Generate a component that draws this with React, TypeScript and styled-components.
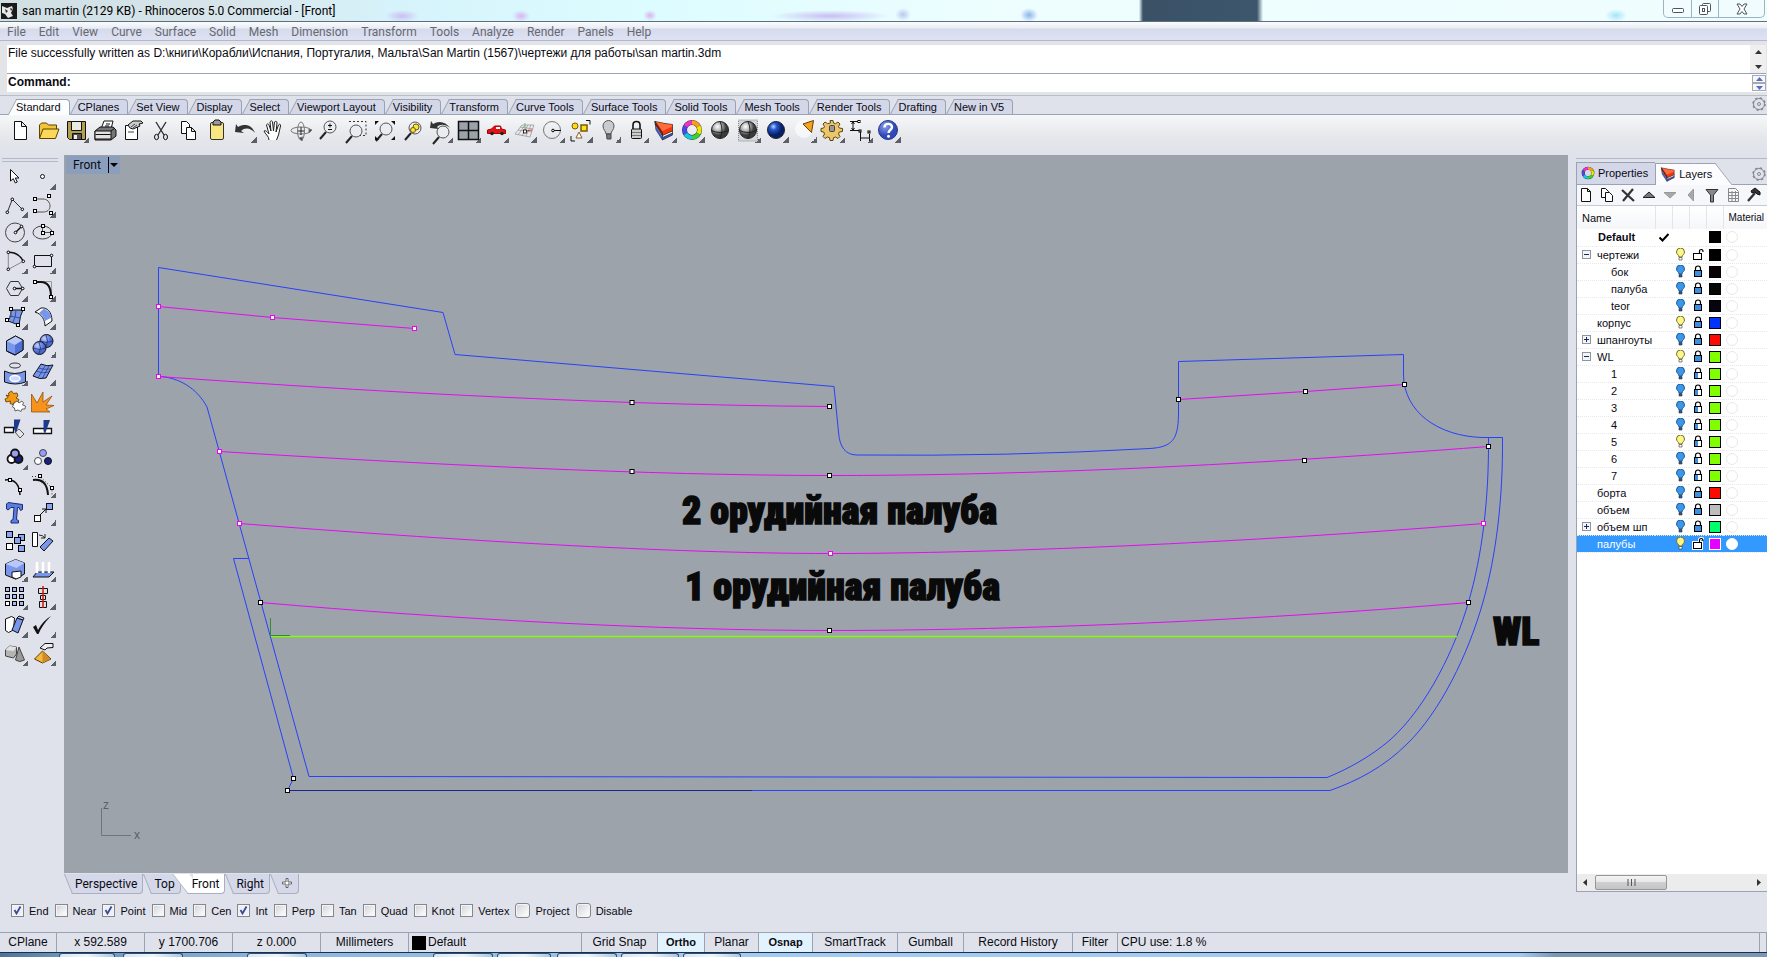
import React from "react";
import styled, { createGlobalStyle, css } from "styled-components";

const ui = `Roboto, "Open Sans", sans-serif`;
const sans = `"Liberation Sans", Arial, sans-serif`;
const chrome = "#dfe2ea";
const line = "#9aa3b3";

const Global = createGlobalStyle`
  * { box-sizing: border-box; }
  body { margin: 0; background: ${chrome}; font: 11px/14px ${sans}; color: #0a0a12; }
  button { font: inherit; color: inherit; background: none; border: 0; padding: 0; margin: 0; }
`;

const Page = styled.div`
  display: flex;
  flex-direction: column;
  min-height: 100vh;
  overflow: hidden;
`;

/* ---------- title bar ---------- */
const TitleBar = styled.header`
  display: flex;
  align-items: flex-start;
  height: 22px;
  padding: 0 2px 0 1px;
  border-bottom: 1px solid #5c6f7c;
  background:
    linear-gradient(90deg, transparent, #3a5166 4px, #3d566c 118px, transparent 124px) 1139px 0 / 124px 21px no-repeat,
    radial-gradient(ellipse, #d9b4f0, transparent 70%) 643px 10px / 14px 11px no-repeat,
    radial-gradient(ellipse, #c9bdf2, transparent 70%) 770px 10px / 120px 12px no-repeat,
    radial-gradient(ellipse, #cdbcf2, transparent 70%) 385px 10px / 34px 12px no-repeat,
    radial-gradient(ellipse, #d9b4f0, transparent 70%) 512px 10px / 18px 12px no-repeat,
    radial-gradient(ellipse, #8fb4ec, transparent 70%) 1020px 8px / 18px 14px no-repeat,
    radial-gradient(ellipse, #b9c8ee, transparent 70%) 895px 8px / 16px 13px no-repeat,
    radial-gradient(ellipse, #a5e4f8, transparent 70%) 1605px 9px / 22px 13px no-repeat,
    linear-gradient(90deg, #cfdfe2, #d8e6ec 240px, #d6f3fb 400px, #dcfcff 640px, #eefeff 1000px, #effdff);
`;
const TitleText = styled.h1`
  flex: 1;
  margin: 0 0 0 5px;
  font: 400 12px/22px ${ui};
  color: #000;
  white-space: nowrap;
`;
const WindowButtons = styled.div`
  display: flex;
  height: 18px;
  border: 1px solid #9db4bc;
  border-top: 0;
  border-radius: 0 0 5px 5px;
  background: #f1fcfe;
`;
const WindowButton = styled.button<{ $wide?: boolean }>`
  display: flex;
  align-items: center;
  justify-content: center;
  width: ${(p) => (p.$wide ? 46 : 27)}px;
  & + & { border-left: 1px solid #9db4bc; }
`;

/* ---------- menu ---------- */
const MenuBar = styled.nav`
  display: flex;
  height: 19px;
  padding-left: 1px;
  border-bottom: 1px solid #b1b8cc;
  background: linear-gradient(#fbfcfd, #e9edf4 6px, #d6dbec 7px, #dee2f4);
`;
const MenuItem = styled.button`
  padding: 0 7px 0 6px;
  font: 12px/20px ${ui};
  color: #66696f;
`;

/* ---------- command area ---------- */
const CommandArea = styled.section`
  display: flex;
  flex-direction: column;
  padding: 4px 1px 3px 7px;
  border-bottom: 1px solid #b9bfc9;
  background: #e2e4e8;
`;
const History = styled.div`
  display: flex;
  height: 29px;
  background: #fff;
  border-bottom: 1px solid ${line};
  font: 12px/16px ${sans};
`;
const HistoryText = styled.p`
  flex: 1;
  margin: 0;
  padding-left: 1px;
`;
const ScrollColumn = styled.div`
  display: flex;
  flex-direction: column;
  justify-content: space-around;
  align-items: center;
  width: 16px;
  background: #efefef;
`;
const CommandRow = styled.label`
  display: flex;
  align-items: flex-start;
  height: 18px;
  padding-left: 1px;
  background: #fff;
  font: 700 12px/16px ${sans};
`;
const CommandInput = styled.input`
  flex: 1;
  min-width: 0;
  height: 16px;
  border: 0;
  outline: 0;
  font: 12px/16px ${sans};
`;
const Spinner = styled.div`
  display: flex;
  flex-direction: column;
  width: 14px;
  padding-top: 1px;
`;
const SpinButton = styled.button`
  display: flex;
  align-items: center;
  justify-content: center;
  height: 8px;
  border: 1px solid #a4a9b4;
  background: #f6f7fb;
`;

/* ---------- toolbar tabs ---------- */
const TabRow = styled.div`
  display: flex;
  align-items: flex-end;
  height: 19px;
  padding: 0 1px 0 8px;
  border-bottom: 1px solid ${line};
`;
const TabSpacer = styled.div`
  flex: 1;
`;
const ToolbarTab = styled.button<{ $active?: boolean }>`
  position: relative;
  height: 15px;
  padding: 0 9px 0 8px;
  line-height: 16px;
  white-space: nowrap;
  z-index: 0;
  margin-bottom: ${(p) => (p.$active ? -1 : 0)}px;
  ${(p) => p.$active && css`height: 16px;`}
  &::before, &::after {
    content: "";
    position: absolute;
    z-index: -1;
    top: 0;
    bottom: 0;
    border-top: 1px solid ${line};
    background: ${(p) => (p.$active ? "#fcfdfe" : "#d3d7e8")};
  }
  &::before {
    left: 4px;
    width: 20px;
    border-left: 1px solid ${line};
    transform: skewX(-28deg);
  }
  &::after {
    left: 14px;
    right: 0;
    border-right: 1px solid ${line};
    border-radius: 0 4px 0 0;
  }
`;
const Toolbar = styled.div`
  display: flex;
  gap: 4px;
  height: 40px;
  padding: 4px 9px;
  background: linear-gradient(#f6f7f8, #e4e6eb 60%, ${chrome});
`;
const ToolButton = styled.button<{ $flyout?: boolean }>`
  width: 24px;
  height: 24px;
  flex: none;
  svg { display: block; overflow: visible; }
  ${(p) =>
    p.$flyout &&
    css`
      background: linear-gradient(135deg, transparent 50%, #5d6167 50%) right bottom / 6px 6px no-repeat;
    `}
`;

/* ---------- workspace ---------- */
const Workspace = styled.main`
  display: flex;
  flex: 1;
`;
const SideTools = styled.aside`
  width: 64px;
  flex: none;
  padding: 3px 2px 0;
`;
const Grip = styled.div`
  height: 4px;
  margin-right: 4px;
  border: solid #b3b9c4;
  border-width: 1px 0;
`;
const SideGrid = styled.div`
  display: grid;
  grid-template-columns: 24px 24px;
  gap: 4px;
  padding: 4px 2px 0;
`;
const Center = styled.div`
  display: flex;
  flex-direction: column;
  flex: 1;
  min-width: 0;
`;
const Viewport = styled.div`
  position: relative;
  display: flex;
  flex: 1;
  background: #9ca3ab;
`;
const Drawing = styled.svg`
  flex: 1;
  min-width: 0;
  width: 100%;
`;
const ViewLabel = styled.button`
  position: absolute;
  top: 1px;
  left: 2px;
  display: flex;
  align-items: center;
  height: 18px;
  padding: 0 2px 0 7px;
  gap: 7px;
  background: #8b9fbd;
  font: 12px/18px ${ui};
`;
const ViewTabs = styled.div`
  display: flex;
  height: 21px;
  padding-top: 1px;
`;
const ViewTab = styled.button<{ $active?: boolean }>`
  position: relative;
  z-index: ${(p) => (p.$active ? 1 : 0)};
  height: 20px;
  padding: 0 6px 0 11px;
  font: 12px/19px ${ui};
  isolation: isolate;
  &::before, &::after {
    content: "";
    position: absolute;
    z-index: -1;
    top: 0;
    bottom: 0;
    border-bottom: 1px solid #a9afc0;
    background: ${(p) => (p.$active ? "#fff" : "#d4d8e9")};
  }
  &::before {
    left: ${(p) => (p.$active ? -1 : 4)}px;
    width: 16px;
    border-left: 1px solid #a9afc0;
    transform: skewX(${(p) => (p.$active ? 38 : 22)}deg);
  }
  &::after {
    left: 12px;
    right: 0;
    border-right: 1px solid #a9afc0;
    border-radius: 0 0 4px 0;
  }
`;

/* ---------- layers panel ---------- */
const Panel = styled.section`
  display: flex;
  flex-direction: column;
  width: 191px;
  flex: none;
  margin: 3px 0 2px 8px;
  border-top: 1px solid #b3b9c4;
`;
const PanelTabs = styled.div`
  display: flex;
  align-items: flex-end;
  height: 26px;
  padding-right: 1px;
  border-bottom: 1px solid ${line};
`;
const PanelTab = styled.button<{ $active?: boolean }>`
  position: relative;
  z-index: 0;
  display: flex;
  align-items: center;
  gap: 3px;
  height: 22px;
  padding: 0 ${(p) => (p.$active ? 18 : 7)}px 0 4px;
  margin-bottom: ${(p) => (p.$active ? -1 : 0)}px;
  border-left: 1px solid ${line};
  font: 11px/20px ${sans};
  &::before, &::after {
    content: "";
    position: absolute;
    z-index: -1;
    top: 0;
    bottom: 0;
    border-top: 1px solid ${line};
    background: ${(p) => (p.$active ? "#fcfcfe" : "#d3d7e8")};
  }
  &::before { left: 0; right: 16px; }
  &::after {
    right: ${(p) => (p.$active ? 6 : 0)}px;
    width: 20px;
    ${(p) => p.$active && css`border-right: 1px solid ${line}; transform: skewX(38deg);`}
  }
`;
const PanelBody = styled.div`
  display: flex;
  flex-direction: column;
  flex: 1;
  border-left: 1px solid ${line};
  border-bottom: 1px solid ${line};
  background: #fff;
`;
const PanelTools = styled.div`
  display: flex;
  align-items: center;
  gap: 5px;
  height: 21px;
  padding-left: 1px;
  background: #f6f7fa;
  border-bottom: 1px solid #c5cad6;
`;
const PanelTool = styled.button`
  display: flex;
  width: 16px;
  height: 16px;
`;
const LayerTable = styled.table`
  width: 100%;
  table-layout: fixed;
  border-collapse: collapse;
  font: 11px/16px ${sans};
`;
const HeadCell = styled.th<{ $small?: boolean }>`
  height: 23px;
  padding: 0 0 0 5px;
  overflow: hidden;
  border-right: 1px solid #e2e5ea;
  background: linear-gradient(#fff, #f5f6f8);
  text-align: left;
  font-size: ${(p) => (p.$small ? 10 : 11)}px;
  font-weight: 400;
  white-space: nowrap;
  &:last-child { border-right: 0; }
`;
const LayerRow = styled.tr<{ $selected?: boolean; $bold?: boolean }>`
  height: 17px;
  border-bottom: 1px dotted #e6e8ec;
  ${(p) => p.$bold && css`font-weight: 700;`}
  ${(p) => p.$selected && css`background: #3399ff; color: #fff;`}
`;
const Cell = styled.td`
  padding: 0;
  svg { display: block; margin: 0 auto; }
`;
const NameBox = styled.div<{ $indent: number }>`
  display: flex;
  align-items: center;
  gap: 6px;
  padding-left: ${(p) => p.$indent}px;
  white-space: nowrap;
`;
const Expander = styled.button`
  width: 9px;
  height: 9px;
  border: 1px solid #8d95a3;
  background:
    linear-gradient(#1b2a55, #1b2a55) center / 5px 1px no-repeat,
    #f2f4f8;
  &[aria-expanded="false"] {
    background:
      linear-gradient(#1b2a55, #1b2a55) center / 5px 1px no-repeat,
      linear-gradient(#1b2a55, #1b2a55) center / 1px 5px no-repeat,
      #f2f4f8;
  }
`;
const Swatch = styled.span<{ $color: string; $light?: boolean }>`
  display: block;
  width: 12px;
  height: 12px;
  margin: 0 auto;
  border: 1px solid ${(p) => (p.$light ? "#fff" : "#000")};
  background: ${(p) => p.$color};
`;
const MaterialDot = styled.span<{ $on?: boolean }>`
  display: block;
  width: 12px;
  height: 12px;
  margin-left: 3px;
  border: 1px solid ${(p) => (p.$on ? "#fff" : "#e9e9e9")};
  border-radius: 50%;
  background: #fff;
`;
const HScroll = styled.div`
  display: flex;
  align-items: center;
  height: 17px;
  margin-top: auto;
  padding: 0 5px;
  background: #ececec;
`;
const ScrollThumb = styled.button`
  display: flex;
  align-items: center;
  justify-content: center;
  width: 72px;
  height: 15px;
  margin: 0 auto 0 6px;
  border: 1px solid #979797;
  border-radius: 2px;
  background: linear-gradient(#f4f4f4, #e6e6e6 50%, #cfcfd1 50%, #c4c4c6);
`;

/* ---------- osnap + status ---------- */
const OsnapBar = styled.div`
  display: flex;
  align-items: center;
  gap: 6px;
  height: 38px;
  padding: 0 0 5px 11px;
`;
const SnapLabel = styled.label`
  display: flex;
  align-items: center;
  gap: 5px;
`;
const SnapBox = styled.input<{ $button?: boolean }>`
  appearance: none;
  width: ${(p) => (p.$button ? 15 : 13)}px;
  height: ${(p) => (p.$button ? 15 : 13)}px;
  margin: 0;
  border: 1px solid #83888f;
  border-radius: ${(p) => (p.$button ? 3 : 0)}px;
  background: linear-gradient(135deg, #cfd2d8, #f8f8f8 80%);
  box-shadow: inset 0 0 0 1px #f4f4f4;
  &:checked {
    background:
      url("data:image/svg+xml,%3Csvg xmlns='http://www.w3.org/2000/svg' viewBox='0 0 11 11'%3E%3Cpath d='M2.5 5l2 3.5L8.500 1.500' fill='none' stroke='%233a4a94' stroke-width='1.800'/%3E%3C/svg%3E") center / 11px 11px no-repeat,
      #eef0f5;
  }
`;
const StatusBar = styled.footer`
  display: flex;
  height: 20px;
  border-top: 1px solid ${line};
  font: 12px/19px ${sans};
`;
const StatusCell = styled.button<{ $w?: number; $on?: boolean; $left?: boolean }>`
  display: flex;
  align-items: center;
  justify-content: ${(p) => (p.$left ? "flex-start" : "center")};
  gap: 2px;
  ${(p) => (p.$w ? css`width: ${p.$w}px; flex: none;` : css`flex: 1;`)}
  padding: 0 3px;
  border-right: 1px solid ${line};
  white-space: nowrap;
  ${(p) => p.$on && css`background: #e3f3fd; font-weight: 700; font-size: 11px;`}
`;
const LayerChip = styled.span`
  width: 14px;
  height: 14px;
  background: #000;
`;
const Taskbar = styled.div`
  display: flex;
  gap: 4px;
  height: 5px;
  padding-left: 59px;
  border-top: 1px solid #16304f;
  background: linear-gradient(90deg, #4f7396, #6d93b8 60px, #8ab4dc 260px, #a3caf0 700px, #a3caf0 86%, #7c96b4 88%);
`;
const TaskItem = styled.span<{ $w: number; $space?: number }>`
  width: ${(p) => p.$w}px;
  margin-left: ${(p) => p.$space || 0}px;
  border: 1px solid #31506f;
  border-bottom: 0;
  border-radius: 3px 3px 0 0;
  background: linear-gradient(90deg, #d5e6f5, #f0f6fb, #a9c8e6);
`;

/* ---------- icons ---------- */
const Svg = ({ children, size = 24, box = 24 }: { children: React.ReactNode; size?: number; box?: number }) => (
  <svg width={size} height={size} viewBox={`0 0 ${box} ${box}`} fill="none" stroke="#111" aria-hidden="true">
    {children}
  </svg>
);
const Sq = ({ x, y, f = "#fff", s = 3 }: { x: number; y: number; f?: string; s?: number }) => (
  <rect x={x - s / 2} y={y - s / 2} width={s} height={s} fill={f} stroke="#000" />
);
const Dot = ({ x, y }: { x: number; y: number }) => <circle cx={x} cy={y} r="1.300" fill="#fff" stroke="#000" />;

const Ball = ({ fill, grid }: { fill: string; grid?: boolean }) => (
  <g>
    <circle cx="11" cy="11" r="8.500" fill={`url(#${fill})`} stroke="#222" />
    {grid && <path d="M2.500 11.500q8.500 4 17 0M11 2.500q4 8.500 0 17" stroke="#222" />}
  </g>
);
const Layers = () => (
  <g stroke="#222" strokeWidth=".7" strokeLinejoin="round">
    <path d="M2 2.500L9.500 14v7L3 11z" fill="#dfe3ee" />
    <path d="M9.500 18l10-4.500V16l-10 5z" fill="#3558c8" />
    <path d="M9.500 15.500l10-4v2.500l-10 4.500z" fill="#fff" />
    <path d="M2.500 7l7 11v3L3 11z" fill="#3558c8" stroke="none" />
    <path d="M2 2.500L9.500 14v3L2.500 6z" fill="#a81505" />
    <path d="M2 2.500L12 4.500l7.500 1V12l-10 4.500V14z" fill="#f5360c" />
    <path d="M3 3l9 2 7 .8v2L9.500 12z" fill="#ff6b3a" stroke="none" />
  </g>
);
const Wheel = () => (
  <g fill="none" strokeWidth="4">
    <circle cx="11" cy="11" r="7.500" stroke="#333" strokeWidth="5" />
    <path d="M11 3.500A7.500 7.500 0 0 1 17.500 7.300" stroke="#ff9b1a" />
    <path d="M17.500 7.300A7.500 7.500 0 0 1 17.500 14.800" stroke="#e8e800" />
    <path d="M17.500 14.800A7.500 7.500 0 0 1 11 18.500" stroke="#35d335" />
    <path d="M11 18.500A7.500 7.500 0 0 1 4.500 14.800" stroke="#12c8e0" />
    <path d="M4.500 14.800A7.500 7.500 0 0 1 4.500 7.300" stroke="#4848f0" />
    <path d="M4.500 7.300A7.500 7.500 0 0 1 11 3.500" stroke="#f032c8" />
  </g>
);
const Lens = ({ x = 13, y = 8 }: { x?: number; y?: number }) => (
  <g>
    <path d={`M${x - 4} ${y + 5}L${x - 10} ${y + 12}`} stroke="#222" strokeWidth="2" />
    <circle cx={x} cy={y} r="6" fill="#e9edf2" fillOpacity=".8" stroke="#555" />
  </g>
);

const topIcons: { name: string; fly?: boolean; art: React.ReactNode }[] = [
  { name: "New", art: <path d="M5.500 2.500h7l5 5v13h-12zM12.500 2.500v5h5" fill="#fff" /> },
  {
    name: "Open",
    art: (
      <>
        <path d="M2.500 19V6l2-2h5l2 2h8v4" fill="#f2c33b" stroke="#5b4300" />
        <path d="M2.500 19.500L6 10h16l-3.500 9.500z" fill="#fbd85a" stroke="#5b4300" />
      </>
    ),
  },
  {
    name: "Save",
    fly: true,
    art: (
      <>
        <path d="M2.500 2.500h18v18h-16l-2-2z" fill="#b2a04c" />
        <path d="M6.500 2.500h10v9h-10z" fill="#e8ebe0" />
        <path d="M7.500 14.500h9v6h-9z" fill="#555" />
        <path d="M9 16h3v4H9z" fill="#eee" stroke="none" />
      </>
    ),
  },
  {
    name: "Print",
    art: (
      <>
        <path d="M8 10l3-8h9l-2 8z" fill="#fff" />
        <path d="M2 12l5-4h13l3 3v6l-5 4H2z" fill="#777" />
        <path d="M2 12h16v8H2z" fill="#e2e2e2" />
        <path d="M2.500 15.500h15M18 12l4-3M13 5h4M12 7h4" />
      </>
    ),
  },
  {
    name: "Document properties",
    art: (
      <>
        <path d="M4.500 6.500h12v14h-12z" fill="#fff" />
        <path d="M7 6l5-4h8l2 2-4 1 1 2-7 3-3-1z" fill="#ccc" />
        <path d="M10 8l4-3M12 9l4-3M7 13h6" stroke="#444" />
      </>
    ),
  },
  {
    name: "Cut",
    art: (
      <>
        <path d="M7 3l8 13M17 3L9 16" stroke="#333" strokeWidth="1.400" />
        <ellipse cx="7.500" cy="18" rx="2" ry="2.700" />
        <ellipse cx="16.500" cy="18" rx="2" ry="2.700" />
      </>
    ),
  },
  {
    name: "Copy",
    art: (
      <>
        <path d="M4.500 2.500h5l3 3v9h-8z" fill="#fff" />
        <path d="M9.500 8.500h5l4 4v8h-9zM14.500 8.500v4h4" fill="#fff" />
      </>
    ),
  },
  {
    name: "Paste",
    art: (
      <>
        <rect x="5.500" y="3.500" width="13" height="17" rx="1.500" fill="#f7e682" stroke="#333" />
        <path d="M8 6V3l2-2h4l2 2v3z" fill="#999" />
      </>
    ),
  },
  {
    name: "Undo",
    fly: true,
    art: <path d="M2 13l1-8 2 3c7-4 14-2 17 6-4-5-10-6-14-2l3 2z" fill="#333" stroke="none" />,
  },
  {
    name: "Pan",
    art: (
      <path
        d="M8 21c0-4-4-6-5-9 2-1 3 1 5 3L5.500 6c1-2 2-1 2.500 0l2 6-1-9c1-2 2.500-1 2.500 0l1 9 1-9c1-1 2.500-1 2.500 1l-1 9 2.500-7c1-1.500 2.500-.5 2 1l-2 9-2 5"
        fill="#fff"
        stroke="#222"
      />
    ),
  },
  {
    name: "Rotate view",
    fly: false,
    art: (
      <g stroke="#777">
        <ellipse cx="12" cy="11.500" rx="10" ry="3.500" />
        <ellipse cx="12" cy="12" rx="3.500" ry="9" />
        <path d="M12 8v8M9 12h6" stroke="#222" />
        <path d="M20 10l3 1-3 3zM10 19l3 3 1-4z" fill="#444" />
      </g>
    ),
  },
  { name: "Zoom dynamic", art: (<><Lens /><path d="M11 6.500h4M13 4.500v4M11 10.500h4" /></>) },
  { name: "Zoom window", art: (<><path d="M4 2.500h17v14h-6" stroke="#333" strokeDasharray="2 2" /><Lens x={11} y={12} /></>) },
  {
    name: "Zoom extents",
    art: (
      <>
        <Lens x={13} y={10} />
        <path d="M2 2h4L2 6zM22 2h-4l4 4zM2 21h4l-4-4zM22 21v-4l-4 4z" fill="#111" stroke="none" />
      </>
    ),
  },
  {
    name: "Zoom selected",
    art: (
      <>
        <Lens x={14} y={9} />
        <circle cx="15" cy="8" r="3" fill="#ffe53b" stroke="#6b5a00" />
        <circle cx="12" cy="11" r="2.500" fill="#ffe53b" stroke="#6b5a00" />
      </>
    ),
  },
  {
    name: "Undo view",
    fly: true,
    art: (
      <>
        <Lens x={14} y={13} />
        <path d="M1 9l1-7 2 3c6-4 13-2 17 4-5-4-10-4-13-1l2 2z" fill="#333" stroke="none" />
      </>
    ),
  },
  {
    name: "Viewports",
    fly: true,
    art: (
      <>
        <path d="M1.500 2.500h20v18h-20z" fill="#9ba2aa" strokeWidth="1.500" />
        <path d="M11.500 2v18M2 11.500h19" strokeWidth="1.500" />
      </>
    ),
  },
  {
    name: "Right view",
    fly: true,
    art: (
      <>
        <path d="M2.500 11l4-1 3-3h6l1 3 4 1v3.500h-18z" fill="#e01414" stroke="#a00" />
        <path d="M11 8h4v2h-4z" fill="#fff" stroke="none" />
        <circle cx="7" cy="14.500" r="1.800" fill="#222" stroke="none" />
        <circle cx="17" cy="14.500" r="1.800" fill="#222" stroke="none" />
      </>
    ),
  },
  {
    name: "Set CPlane",
    fly: true,
    art: (
      <g stroke="#999" strokeWidth=".8">
        <path d="M2 15l7-9h12l-4 12zM5 16l7-10M9 17l6-11M13 17l5-11M5 11l14 2M7 8l13 2" />
        <path d="M13 12l6-1" stroke="#d00" />
        <path d="M12 12V4" stroke="#6a6" />
        <Sq x={12} y={12.5} />
      </g>
    ),
  },
  {
    name: "Circle",
    fly: true,
    art: (
      <>
        <circle cx="11" cy="11" r="8.500" stroke="#777" />
        <path d="M11 11.500h9" />
        <Dot x={12} y={11.5} />
      </>
    ),
  },
  {
    name: "Select",
    fly: true,
    art: (
      <>
        <path d="M17 1.500h4v4M2 17v5h4" />
        <circle cx="6" cy="7" r="3" fill="#ffd91a" stroke="#7a5a00" />
        <rect x="12" y="6" width="6" height="6" fill="#ffe11a" stroke="#7a5a00" strokeWidth="1.500" />
        <path d="M10 13l3 6H7z" fill="#fff" stroke="#8a5a20" />
      </>
    ),
  },
  {
    name: "Hide",
    fly: true,
    art: (
      <>
        <path d="M9 15c0-3-3-4-3-8a5.500 5.500 0 0 1 11 0c0 4-3 5-3 8z" fill="#c9cbce" stroke="#555" />
        <path d="M9.500 15h4.500v5H10z" fill="#777" stroke="#444" />
      </>
    ),
  },
  {
    name: "Lock",
    fly: true,
    art: (
      <>
        <path d="M8 10V6q0-3.500 3.500-3.500T15 6v4" strokeWidth="1.600" />
        <rect x="6.500" y="10" width="10" height="9.500" rx="1" fill="#ccc" />
        <path d="M7 13.500h9M7 16.500h9" stroke="#777" />
      </>
    ),
  },
  { name: "Layers", fly: true, art: <Layers /> },
  { name: "Object properties", fly: true, art: <Wheel /> },
  { name: "Shade", art: <Ball fill="grey" grid /> },
  {
    name: "Shade viewport",
    fly: true,
    art: (
      <>
        <rect x="1.500" y="1" width="19" height="21" stroke="#888" strokeDasharray="1 1" fill="#d4d6da" />
        <Ball fill="grey" grid />
      </>
    ),
  },
  { name: "Render", fly: true, art: <Ball fill="blue" /> },
  {
    name: "Spotlight",
    fly: true,
    art: (
      <>
        <circle cx="11" cy="10" r="9" fill="#fff" fillOpacity=".6" stroke="none" />
        <path d="M10 5l10.500-3.500-2 12z" fill="#f5a21c" stroke="#6b3e00" />
      </>
    ),
  },
  {
    name: "Options",
    fly: true,
    art: (
      <>
        <path
          d="M9.500 4L9 1.500h3L12.500 4l2 .7L17 3l2 2-1.500 2.500.8 1.500 3.200.5v3l-3.200.5-.8 2L19 17.500l-2 2-2.500-1.500-2 .7-.5 2.800H9l-.5-2.800-2-.7L4 19.500l-2-2L3.500 15l-.8-2-2.700-.5v-3L2.700 9l.8-1.500L2 5l2-2 2.500 1.700z"
          fill="#edc667"
          stroke="#5d4410"
        />
        <rect x="8.500" y="6.500" width="5" height="6" rx="1" fill="#999" stroke="#444" />
      </>
    ),
  },
  {
    name: "Dimension",
    fly: true,
    art: (
      <>
        <path d="M1 2.500h8M1 11.500h8M4 3v8M2.500 5L4 3l1.500 2M2.500 9L4 11l1.500-2M11.500 12v10M20.500 15v7M12 19h8M9 11.500h3" />
        <Sq x={10} y={2.5} s={2} />
        <Sq x={11} y={12} s={2} />
        <Sq x={20} y={13} s={2} />
      </>
    ),
  },
  {
    name: "Help",
    fly: true,
    art: (
      <>
        <circle cx="11" cy="11" r="9.500" fill="url(#help)" stroke="#27368a" />
        <path d="M7.500 8.500c0-5 7.500-4.500 7.500-.5 0 3-3.500 3-3.500 6" stroke="#fff" strokeWidth="2.400" />
        <circle cx="11.500" cy="17.300" r="1.500" fill="#fff" stroke="none" />
      </>
    ),
  },
];

const B = "#7896ec";
const L = "#b9c8f8";
const sideIcons: { name: string; fly?: boolean; art: React.ReactNode }[] = [
  { name: "Pointer", art: <path d="M6.500 3.500V15l2.800-2.300 2 4.300 2-1-2-4h3.700z" fill="#fff" /> },
  { name: "Point", fly: true, art: <circle cx="10.500" cy="10.500" r="2" fill="#fff" /> },
  { name: "Polyline", fly: true, art: (<><path d="M3.300 18.300l5-13 10 10" stroke="#333" /><Dot x={3.3} y={18.3} /><Dot x={8.3} y={5.3} /><Dot x={18.3} y={15.3} /></>) },
  { name: "Curve", fly: true, art: (<><path d="M3 5h8c4 0 7 3 7 7s-3 6-7 6H3" stroke="#555" /><Sq x={3} y={5} /><Sq x={17} y={2} /><Sq x={3} y={17} /><Sq x={19} y={19} /></>) },
  { name: "Circle center", fly: true, art: (<><circle cx="11" cy="10.500" r="9.500" stroke="#444" /><path d="M11.500 10.500l6-6" strokeWidth="1.500" /><Dot x={11.5} y={10.5} /><Dot x={17.5} y={4.5} /></>) },
  { name: "Ellipse", fly: true, art: (<><ellipse cx="10.500" cy="10.500" rx="9.500" ry="6.500" stroke="#444" /><path d="M10.500 4v6.500H20" stroke="#555" /><Sq x={11} y={4} /><Sq x={11} y={11} /><Sq x={20} y={11} /></>) },
  { name: "Arc", fly: true, art: (<><path d="M4.300 2.300v17l15-8" stroke="#888" /><path d="M4.300 2.300c7 0 12 3 15 9" strokeWidth="1.500" /><Dot x={4.3} y={2.3} /><Dot x={19.3} y={11.3} /><Dot x={4.3} y={19.3} /></>) },
  { name: "Rectangle", fly: true, art: (<><path d="M2.500 5.500h17v11h-17z" /><Dot x={19.5} y={5.5} /><Dot x={2.5} y={16.5} /></>) },
  { name: "Polygon", fly: true, art: (<><path d="M2.500 10.500l4-7h8l4 7-4 7h-8z" stroke="#333" /><path d="M10.500 10.500h8" strokeWidth="1.500" /><Dot x={10.5} y={10.5} /><Dot x={18.7} y={10.5} /></>) },
  { name: "Fillet curves", fly: true, art: (<><path d="M9 3.500h10.500V19" stroke="#999" /><path d="M3 4h6q10 0 10 15" strokeWidth="2" /><Sq x={3} y={4} /><Sq x={19} y={19} /></>) },
  { name: "Surface from points", fly: true, art: (<><path d="M7 4h12q-3 5-4 15L4 15q4-5 3-11z" fill={B} /><path d="M5 10l12 2M12 4q0 7-3 12" stroke="#3c4f94" /><Sq x={7} y={3} /><Sq x={19} y={3} /><Sq x={3} y={14} /><Sq x={14} y={19} /></>) },
  { name: "Sweep surface", fly: true, art: (<><path d="M3 6l6-4c6-1 11 4 11 13l-7 5c0-6-3-12-10-14z" fill="#fff" /><path d="M7 7l5-4.500q7 4 7.500 9L13 15q-2-6-6-8z" fill={B} stroke="none" /></>) },
  { name: "Box", fly: true, art: (<><path d="M2.500 7l9-5 7.500 4v10l-8 5-8.500-4z" fill={B} /><path d="M2.500 7l9-5 7.500 4-8 5z" fill={L} stroke="none" /><path d="M11 11v10l8-5V6z" fill="#4f70d6" stroke="none" /><path d="M2.500 7l9-5 7.500 4v10l-8 5-8.500-4z" /></>) },
  { name: "Boolean union", fly: true, art: (<><circle cx="14.500" cy="7" r="6.500" fill="url(#blue2)" /><circle cx="7.500" cy="14" r="6.500" fill="url(#blue2)" /><path d="M8 7q6 3 13 0M14 1q3 6 0 12M1 14q6 3 13 0M7 8q3 6 0 12" stroke="#20306e" strokeWidth=".8" /></>) },
  { name: "Project", fly: true, art: (<><ellipse cx="11" cy="3.500" rx="5.500" ry="2.500" stroke="#333" /><path d="M.5 9q10 5 21 0v11q-10 4-21 0z" fill={B} /><ellipse cx="11" cy="16.500" rx="5" ry="3" fill="#cfd9ff" stroke="#fff" strokeWidth="1.500" /></>) },
  { name: "Mesh", fly: true, art: (<><path d="M1 14L9 2q6 3 12 1l-7 13q-6 2-13-2z" fill={B} /><path d="M4 9q6 3 13 1M6 6q6 2 13 1M13 4L6 16M17 4l-7 13" stroke="#25357e" strokeWidth=".7" /></>) },
  {
    name: "Join",
    art: (
      <>
        <path d="M2 5l3 1-.5-3 3-2 2 2.500L13 3l1 3-2 2 3 1.500L13.500 13l-3-1L9 14.500 6 13.500 6.500 11 2 12 1 9l3-1.500z" fill="#f39a13" stroke="#5a3500" strokeWidth=".8" />
        <path d="M10 13l3-2 2 2 3-2 1.500 2-1 2 3 1-.5 3-3 0-1 2.500-3-1.500-3 1-.5-3-2-1z" fill="#fff" stroke="#444" strokeWidth=".8" />
      </>
    ),
  },
  { name: "Explode", art: <path d="M-.5 22V4l5.500 9 6-11v10l9-6-6 9 8 .5-8 3.500 4 3z" fill="#f6921e" stroke="#8a4400" strokeWidth=".7" /> },
  { name: "Trim", art: (<><path d="M.5 9.500h9v5h-9z" fill="#fff" strokeWidth="1.300" /><path d="M11 14l4-3 5 5-4 4z" fill="#e4e6ea" stroke="#555" /><path d="M10 1.500h6.500L12 15l-2-4z" fill="#1f3a8c" stroke="none" /></>) },
  { name: "Split", art: (<><path d="M1.500 10.500h18v5h-18z" fill="#fff" strokeWidth="1.300" /><path d="M11.500 2h6.500l-5 14-1.500-3z" fill="#1f3a8c" stroke="none" /></>) },
  { name: "Group", fly: true, art: (<g strokeWidth="1.800"><circle cx="7.500" cy="13" r="4" fill="#fff" /><circle cx="14.500" cy="13" r="4" fill="#1c2080" /><circle cx="11" cy="7.500" r="4" fill="#9a9cf0" /></g>) },
  { name: "Ungroup", art: (<><circle cx="11" cy="7" r="3.500" fill="#9a9cf0" stroke="#445" /><circle cx="6" cy="15" r="3.500" fill="#fff" stroke="#445" /><circle cx="16" cy="15" r="3.500" fill="#1c2080" /></>) },
  { name: "Edit points", art: (<><path d="M1 6q14-2 15 15" strokeWidth="1.500" /><Sq x={6} y={6} /><Sq x={16} y={16} /></>) },
  { name: "Control points", fly: true, art: (<><path d="M1 6q14-2 15 15" strokeWidth="2" /><path d="M0 2.500h8l12 11.500v8" stroke="#333" strokeDasharray="1 2" /><Sq x={8} y={2} /><Sq x={20} y={14} /></>) },
  { name: "Text", art: <path d="M2.500 2l1.500-1.500 14.500 2v5l-2 1-1.500-3h-1.500l-1 12 2 1v2.500H7v-2.500l2-1 1-12H7L4 8 2.500 7z" fill="#5c7de0" stroke="#1a2c70" /> },
  { name: "Move", fly: true, art: (<><path d="M8 13l6-6M10 7h4v4" /><rect x="2.500" y="13.500" width="6" height="6" fill="#fff" /><rect x="14.500" y="1.500" width="6" height="6" fill="#8aa4f0" /></>) },
  { name: "Copy objects", art: (<><Sq x={5.5} y={4.5} s={6} f="#8aa4f0" /><Sq x={5.5} y={16.5} s={6} /><Sq x={17.5} y={7.5} s={6} f="#8aa4f0" /><Sq x={13.5} y={10.5} s={6} f="#8aa4f0" /><Sq x={17.5} y={18.5} s={6} f="#8aa4f0" /></>) },
  { name: "Rotate", art: (<><path d="M.5 2.500h5v14h-5z" fill="#fff" /><path d="M8 17l9-9 4 3-9 10z" fill={B} /><path d="M7 5q4 0 6 3M13 4v4H9" strokeWidth=".9" /></>) },
  { name: "Solid tools", fly: true, art: (<><path d="M1.500 6l10-4.500L20.500 5v11l-9 5-10-4z" fill={B} /><path d="M1.500 6l10-4.500L20.500 5l-8 5z" fill={L} stroke="none" /><path d="M8 14l9-1v6l-5 2-4-2z" fill="#fff" /></>) },
  { name: "Project curve", fly: true, art: (<><path d="M1 19l4-5h17l-5 5z" fill={B} /><path d="M5 4v11M11 4v11M17 4v11" stroke="#fff" strokeWidth="2.500" /></>) },
  {
    name: "Array",
    fly: true,
    art: (
      <>
        {[3, 10, 17].map((x) => [3, 10, 17].map((y) => <Sq key={`${x}-${y}`} x={x + 0.5} y={y + 0.5} s={4} f={x === 3 && y === 17 ? "#fff" : "#a9b9f3"} />))}
      </>
    ),
  },
  { name: "Align", fly: true, art: (<><path d="M6.500 2.500h9v5h-9zM8.500 9.500h5v4h-5zM7.500 15.500h7v6h-7z" fill="#e9dede" /><path d="M11 0v22" stroke="#c81818" strokeWidth="1.500" /></>) },
  { name: "Offset", fly: true, art: (<><path d="M1.500 5l6-2.500 3 1.500-1 12-5 2.500-3-2z" fill="#fff" /><path d="M13 4l6 2-5 13-6-3z" fill={B} /><path d="M13 4l2-2 5 2-1 2z" fill={L} /></>) },
  { name: "Check", fly: true, art: <path d="M1 13l3-2 2 5C10 9 14 5 19 2 13 8 9 14 6.500 20H5z" fill="#111" stroke="none" /> },
  { name: "Solids", fly: true, art: (<><path d="M15 5l5.500 13q-5 3-9 0z" fill="#999" stroke="#444" /><path d="M1.500 8l4-4 7 1v7l-3 4-8-2z" fill="#b4b4b4" stroke="#444" /><path d="M1.500 8l4-4 7 1-3 4z" fill="#e2e2e2" stroke="none" /></>) },
  { name: "Pyramid", fly: true, art: (<><path d="M2.500 17l8-8 8.500 8-8.500 4z" fill="#f5b73e" stroke="#5a3c00" /><path d="M10.500 9v12l8-4z" fill="#cf8c26" stroke="none" /><path d="M8 6l5-4.500h8v4l-6 .5-2 2z" fill="#eee" /></>) },
];

const Bulb = ({ on }: { on?: boolean }) => (
  <svg width="9" height="13" viewBox="0 0 9 13" aria-hidden="true">
    <path d="M3 9c0-2-2.500-2.500-2.500-5a4 4 0 0 1 8 0c0 2.500-2.500 3-2.500 5z" fill={on ? "#fbf78c" : "#3d97e8"} stroke={on ? "#77701c" : "#1d5c9c"} />
    <path d="M3 9.500h3v2.500H3z" fill={on ? "#fff" : "#1d5c9c"} stroke="#333" strokeWidth=".6" />
  </svg>
);
const LockIcon = ({ kind, light }: { kind: "open" | "full" | "half"; light?: boolean }) => (
  <svg width="12" height="13" viewBox="0 0 12 13" fill="none" stroke="#000" aria-hidden="true">
    {light && <path d="M1.500 5.500h8v7h-8zM7.500 5V3q0-1.500 2-1.500t2 2" stroke="#fff" strokeWidth="3" />}
    <path d={kind === "open" ? "M7.500 6V3q0-1.500 1.800-1.500T11 4" : "M3.500 6V3.500q0-2.500 2.500-2.500t2.500 2.500V6"} strokeWidth="1.200" />
    <rect x={kind === "open" ? 1.5 : 2.5} y="5.500" width={kind === "open" ? 8 : 7} height="6" fill="#fff" />
    {kind !== "open" && <rect x="3" y="6" width={kind === "full" ? 6 : 3} height="5" fill="#3d8fe0" stroke="none" />}
  </svg>
);
const Gear = () => (
  <svg width="14" height="14" viewBox="0 0 14 14" fill="none" stroke="#85888e" aria-hidden="true">
    <circle cx="7" cy="7" r="5.500" strokeWidth="1" />
    <circle cx="7" cy="7" r="6" strokeWidth="1.600" strokeDasharray="2.360 2.360" />
    <circle cx="7" cy="7" r="1.500" />
  </svg>
);
const Arrow = ({ d, color = "#333" }: { d: "up" | "down" | "left" | "right"; color?: string }) => {
  const paths = { up: "M0 5l3.500-4L7 5z", down: "M0 2l3.500 4L7 2z", left: "M5 0L1 3.500 5 7z", right: "M2 0l4 3.500L2 7z" };
  return (
    <svg width="7" height="7" viewBox="0 0 7 7" aria-hidden="true">
      <path d={paths[d]} fill={color} />
    </svg>
  );
};

const panelIcons: { name: string; art: React.ReactNode }[] = [
  { name: "New layer", art: <path d="M3.500 1.500h6l3 3v10h-9zM9.500 1.500v3h3" fill="#fff" /> },
  { name: "New sublayer", art: (<><path d="M2.500 1.500h4l3 3v6h-7z" fill="#fff" /><path d="M6.500 5.500h4l3 3v6h-7z" fill="#fff" /></>) },
  { name: "Delete", art: <path d="M2 3l12 11M13 2L3 14" strokeWidth="2.200" stroke="#333" /> },
  { name: "Move up", art: <path d="M2 10.500L8 5l6 5.500z" fill="#777" stroke="#222" /> },
  { name: "Move down", art: <path d="M2 5.500L8 11l6-5.500z" fill="#a8a8a8" stroke="#999" /> },
  { name: "Move out", art: <path d="M10.500 2L5 8l5.500 6z" fill="#a8a8a8" stroke="#999" /> },
  { name: "Filter", art: (<path d="M2 2.500h12L9.500 8v7h-3V8z" fill="#888" stroke="#333" />) },
  { name: "Columns", art: (<path d="M3.500 1.500h7l3 3v10h-10zM3.500 5.500h10M3.500 8.500h10M3.500 11.500h10M7 4v10M10.500 4v10" stroke="#888" />) },
  { name: "Tools", art: (<><path d="M2 14L9 6" stroke="#333" strokeWidth="2.400" /><path d="M5 4l4-3 5 4v3l-3-1-2-2-3 1z" fill="#333" /></>) },
];

/* ---------- data ---------- */
const menus = ["File", "Edit", "View", "Curve", "Surface", "Solid", "Mesh", "Dimension", "Transform", "Tools", "Analyze", "Render", "Panels", "Help"];
const tabs = ["Standard", "CPlanes", "Set View", "Display", "Select", "Viewport Layout", "Visibility", "Transform", "Curve Tools", "Surface Tools", "Solid Tools", "Mesh Tools", "Render Tools", "Drafting", "New in V5"];

type Layer = {
  name: string;
  indent: number;
  color: string;
  bulb?: boolean;
  lock?: "open" | "full" | "half";
  expanded?: boolean;
  current?: boolean;
  selected?: boolean;
};
const green = "#80ff00";
const layers: Layer[] = [
  { name: "Default", indent: 21, color: "#000", current: true },
  { name: "чертежи", indent: 5, color: "#000", bulb: true, lock: "open", expanded: true },
  { name: "бок", indent: 34, color: "#0a0303", bulb: false, lock: "full" },
  { name: "палуба", indent: 34, color: "#040703", bulb: false, lock: "full" },
  { name: "teor", indent: 34, color: "#05050f", bulb: false, lock: "full" },
  { name: "корпус", indent: 20, color: "#0033ff", bulb: true, lock: "full" },
  { name: "шпангоуты", indent: 5, color: "#ff0a00", bulb: false, lock: "full", expanded: false },
  { name: "WL", indent: 5, color: green, bulb: true, lock: "full", expanded: true },
  ...["1", "2", "3", "4", "5", "6", "7"].map((name) => ({
    name,
    indent: 34,
    color: green,
    bulb: name === "5",
    lock: "half" as const,
  })),
  { name: "борта", indent: 20, color: "#ff0a00", bulb: false, lock: "full" },
  { name: "объем", indent: 20, color: "#bdbdbd", bulb: false, lock: "full" },
  { name: "объем шп", indent: 5, color: "#00ff6a", bulb: false, lock: "full", expanded: false },
  { name: "палубы", indent: 20, color: "#e600ff", bulb: true, lock: "open", selected: true },
];

const snaps: [string, boolean][] = [
  ["End", true], ["Near", false], ["Point", true], ["Mid", false], ["Cen", false], ["Int", true],
  ["Perp", false], ["Tan", false], ["Quad", false], ["Knot", false], ["Vertex", false],
];

const blackPoints = [[632, 402.5], [829.5, 406.5], [632, 471.5], [829.5, 475.5], [1304.5, 460.5], [1488.5, 446.5], [829.5, 630.5], [1468.5, 602.5], [260.5, 602.5], [1178.5, 399.5], [1305.5, 391.5], [1404.5, 384.5], [293.5, 778.5], [287.5, 790.5]];
const pinkPoints = [[158.5, 306.5], [272.5, 317.5], [414.5, 328.5], [158.5, 376.5], [219.5, 451.5], [239.5, 523.5], [830.5, 553.5], [1483.5, 523.5]];

const ShipDrawing = () => (
  <Drawing viewBox="64 155 1504 718" preserveAspectRatio="xMinYMin meet" fill="none" role="img" aria-label="Ship profile">
    <g stroke="#2a40fa">
      <path d="M158.500 376.500V267.500L443 312.500 455 354.500 834 386.500 838.500 432Q840 455 857 455 1010 456.500 1150 448.500C1172 447 1178 440 1178.500 415V361.500L1403.500 354.500V375C1404 412 1438 436 1482 437.500H1502.500C1503 500 1496 556 1483 602 1468 655 1440 712 1407 744 1384 767 1357 781 1330 790.500H287.500L293.500 778.500 233.500 558.500H249" />
      <path d="M158.500 376.500C178 377 197 388 207 407L309 776.500 1327 777.500C1348 769 1370 757 1390 740 1428 706 1456 646 1468.500 602 1482 556 1489 500 1488.500 437.500" />
    </g>
    <path d="M287.500 790.500H752" stroke="#1d2585" />
    <g stroke="#e60af5">
      <path d="M158.500 306.500L272.500 317.500 414.500 328.500" />
      <path d="M158.500 376.500C350 390 480 397 632 402.500Q740 406 829.500 406.500" />
      <path d="M219.500 451.500C420 464 650 475.500 829.500 475.500S1220 467 1488.500 446.500" />
      <path d="M239.500 523.500C450 540 670 553.500 830.500 553.500S1240 543 1483.500 523.500" />
      <path d="M260.500 602.500C450 619 660 630.500 829.500 630.500S1240 622 1468.500 602.500" />
      <path d="M1178.500 399.500L1305.500 391.500 1404.500 384.500" />
    </g>
    <path d="M271 636.500H1457" stroke="#80ff00" strokeWidth="1.400" />
    <path d="M270.500 618V635.500H290" stroke="#2e8f2e" />
    <g stroke="#000" fill="#fff">
      {blackPoints.map(([x, y]) => <rect key={`${x},${y}`} x={x - 2} y={y - 2} width="4" height="4" />)}
    </g>
    <g stroke="#f000f0" fill="#fff">
      {pinkPoints.map(([x, y]) => <rect key={`${x},${y}`} x={x - 2} y={y - 2} width="4" height="4" />)}
    </g>
    <g fill="#0a0a0a" stroke="#0a0a0a" strokeWidth="1.500" fontFamily='Impact, "Roboto Condensed", "Liberation Sans", sans-serif' fontWeight="900" fontSize="38">
      <text x="682" y="524">2 орудийная палуба</text>
      <text x="685" y="600">1 орудийная палуба</text>
      <text x="1493" y="645">WL</text>
    </g>
    <path d="M101.500 808V835.500H131" stroke="#70757c" />
    <g fill="#5b6067" fontFamily="Liberation Sans, sans-serif" fontSize="12">
      <text x="103" y="809">z</text>
      <text x="134" y="839">x</text>
    </g>
  </Drawing>
);

export default function App() {
  return (
    <Page>
      <Global />
      <svg width="0" height="0" style={{ position: "absolute" }} aria-hidden="true">
        <defs>
          <radialGradient id="grey" cx=".35" cy=".3"><stop offset="0" stopColor="#fff" /><stop offset=".5" stopColor="#b5b5b5" /><stop offset="1" stopColor="#3c3c3c" /></radialGradient>
          <radialGradient id="blue" cx=".35" cy=".3"><stop offset="0" stopColor="#b9d4ff" /><stop offset=".4" stopColor="#2357d0" /><stop offset="1" stopColor="#071f66" /></radialGradient>
          <radialGradient id="blue2" cx=".35" cy=".3"><stop offset="0" stopColor="#c3d0ff" /><stop offset="1" stopColor="#4867cf" /></radialGradient>
          <radialGradient id="help" cx=".35" cy=".3"><stop offset="0" stopColor="#8ba0ec" /><stop offset="1" stopColor="#3048b8" /></radialGradient>
        </defs>
      </svg>

      <TitleBar>
        <svg width="16" height="19" viewBox="0 0 16 19" aria-hidden="true">
          <rect y="3" width="16" height="16" fill="#1a1a1a" />
          <path d="M1 6l5 2 5-2 1 3-2 4 2 3-5 2-3-4-3-1z" fill="#e8e8e8" />
          <path d="M4 9l3 2-2 2zM9 8l3 1-2 2z" fill="#333" />
        </svg>
        <TitleText>san martin (2129 KB) - Rhinoceros 5.0 Commercial - [Front]</TitleText>
        <WindowButtons>
          <WindowButton aria-label="Minimize">
            <svg width="12" height="12" viewBox="0 0 12 12"><rect x=".5" y="5.500" width="11" height="4" rx="1" fill="#fff" stroke="#4a5560" /></svg>
          </WindowButton>
          <WindowButton aria-label="Restore">
            <svg width="12" height="12" viewBox="0 0 12 12" fill="#fff" stroke="#4a5560"><rect x="3.500" y=".5" width="8" height="8" rx="1" /><rect x=".5" y="2.500" width="8" height="9" rx="1" /><rect x="3.500" y="5.500" width="2" height="3" /></svg>
          </WindowButton>
          <WindowButton $wide aria-label="Close">
            <svg width="12" height="12" viewBox="0 0 12 12"><path d="M1 1h3l2 2.500L8 1h3L8 6l3 5H8L6 8.500 4 11H1l3-5z" fill="#fff" stroke="#4a5560" /></svg>
          </WindowButton>
        </WindowButtons>
      </TitleBar>

      <MenuBar>{menus.map((m) => <MenuItem key={m}>{m}</MenuItem>)}</MenuBar>

      <CommandArea>
        <History>
          <HistoryText>File successfully written as D:\книги\Корабли\Испания, Португалия, Мальта\San Martin (1567)\чертежи для работы\san martin.3dm</HistoryText>
          <ScrollColumn><Arrow d="up" /><Arrow d="down" /></ScrollColumn>
        </History>
        <CommandRow>
          Command:
          <CommandInput />
          <Spinner>
            <SpinButton aria-label="Previous"><Arrow d="up" color="#5a6cc0" /></SpinButton>
            <SpinButton aria-label="Next"><Arrow d="down" color="#5a6cc0" /></SpinButton>
          </Spinner>
        </CommandRow>
      </CommandArea>

      <TabRow>
        {tabs.map((t, i) => <ToolbarTab key={t} $active={i === 0}>{t}</ToolbarTab>)}
        <TabSpacer />
        <button aria-label="Toolbar options"><Gear /></button>
      </TabRow>
      <Toolbar>
        {topIcons.map((i) => <ToolButton key={i.name} $flyout={i.fly} aria-label={i.name}><Svg>{i.art}</Svg></ToolButton>)}
      </Toolbar>

      <Workspace>
        <SideTools>
          <Grip />
          <SideGrid>
            {sideIcons.map((i) => <ToolButton key={i.name} $flyout={i.fly} aria-label={i.name}><Svg>{i.art}</Svg></ToolButton>)}
          </SideGrid>
        </SideTools>

        <Center>
          <Viewport>
            <ShipDrawing />
            <ViewLabel>
              Front
              <svg width="10" height="16" viewBox="0 0 10 16" aria-hidden="true"><path d="M.5 0v16" stroke="#000" /><path d="M2 6h8l-4 4z" fill="#000" /></svg>
            </ViewLabel>
          </Viewport>
          <ViewTabs>
            <ViewTab>Perspective</ViewTab>
            <ViewTab>Top</ViewTab>
            <ViewTab $active>Front</ViewTab>
            <ViewTab>Right</ViewTab>
            <ViewTab aria-label="New viewport">
              <svg width="12" height="10" viewBox="0 0 12 10" aria-hidden="true"><path d="M5 .5h2v3.500h3.500v2H7v3.500H5V6H1.500V4H5z" fill="#fff" stroke="#666" /></svg>
            </ViewTab>
          </ViewTabs>
        </Center>

        <Panel>
          <PanelTabs>
            <PanelTab><Svg size={14} box={22}><Wheel /></Svg>Properties</PanelTab>
            <PanelTab $active><Svg size={16} box={22}><Layers /></Svg>Layers</PanelTab>
            <TabSpacer />
            <button aria-label="Panel options"><Gear /></button>
          </PanelTabs>
          <PanelBody>
            <PanelTools>
              {panelIcons.map((i) => <PanelTool key={i.name} aria-label={i.name}><Svg size={16} box={16}>{i.art}</Svg></PanelTool>)}
            </PanelTools>
            <LayerTable>
              <colgroup>
                <col style={{ width: 78 }} /><col style={{ width: 17 }} /><col style={{ width: 17 }} /><col style={{ width: 17 }} /><col style={{ width: 17 }} /><col />
              </colgroup>
              <thead>
                <tr>
                  <HeadCell>Name</HeadCell>
                  <HeadCell aria-label="Current" /><HeadCell aria-label="On" /><HeadCell aria-label="Lock" /><HeadCell aria-label="Color" />
                  <HeadCell $small>Material</HeadCell>
                </tr>
              </thead>
              <tbody>
                {layers.map((l) => (
                  <LayerRow key={l.name} $selected={l.selected} $bold={l.current}>
                    <Cell>
                      <NameBox $indent={l.indent}>
                        {l.expanded !== undefined && <Expander aria-label={`Toggle ${l.name}`} aria-expanded={l.expanded} />}
                        {l.name}
                      </NameBox>
                    </Cell>
                    <Cell>{l.current && <svg width="10" height="9" viewBox="0 0 10 9" aria-hidden="true"><path d="M.5 4.500l3 3L9.500 1" fill="none" stroke="#000" strokeWidth="2" /></svg>}</Cell>
                    <Cell>{l.lock && <Bulb on={l.bulb} />}</Cell>
                    <Cell>{l.lock && <LockIcon kind={l.lock} light={l.selected} />}</Cell>
                    <Cell><Swatch $color={l.color} $light={l.selected} /></Cell>
                    <Cell><MaterialDot $on={l.selected} /></Cell>
                  </LayerRow>
                ))}
              </tbody>
            </LayerTable>
            <HScroll>
              <Arrow d="left" />
              <ScrollThumb aria-label="Scroll">
                <svg width="9" height="7" viewBox="0 0 9 7" aria-hidden="true"><path d="M1 0v7M4.500 0v7M8 0v7" stroke="#555" /></svg>
              </ScrollThumb>
              <Arrow d="right" />
            </HScroll>
          </PanelBody>
        </Panel>
      </Workspace>

      <OsnapBar>
        {snaps.map(([name, on]) => <SnapLabel key={name}><SnapBox type="checkbox" defaultChecked={on} />{name}</SnapLabel>)}
        <SnapLabel><SnapBox $button type="checkbox" />Project</SnapLabel>
        <SnapLabel><SnapBox $button type="checkbox" />Disable</SnapLabel>
      </OsnapBar>

      <StatusBar>
        <StatusCell $w={57}>CPlane</StatusCell>
        <StatusCell $w={88}>x 592.589</StatusCell>
        <StatusCell $w={88}>y 1700.706</StatusCell>
        <StatusCell $w={88}>z 0.000</StatusCell>
        <StatusCell $w={88}>Millimeters</StatusCell>
        <StatusCell $w={173} $left><LayerChip />Default</StatusCell>
        <StatusCell $w={76}>Grid Snap</StatusCell>
        <StatusCell $w={47} $on>Ortho</StatusCell>
        <StatusCell $w={54}>Planar</StatusCell>
        <StatusCell $w={54} $on>Osnap</StatusCell>
        <StatusCell $w={85}>SmartTrack</StatusCell>
        <StatusCell $w={66}>Gumball</StatusCell>
        <StatusCell $w={109}>Record History</StatusCell>
        <StatusCell $w={45}>Filter</StatusCell>
        <StatusCell $left>CPU use: 1.8 %</StatusCell>
        <StatusCell $w={7} aria-label="Resize" />
      </StatusBar>
      <Taskbar>
        <TaskItem $w={56} />
        <TaskItem $w={60} $space={4} />
        <TaskItem $w={60} $space={60} />
        <TaskItem $w={60} $space={122} />
        <TaskItem $w={54} />
        <TaskItem $w={60} $space={2} />
        <TaskItem $w={58} />
        <TaskItem $w={58} />
      </Taskbar>
    </Page>
  );
}
